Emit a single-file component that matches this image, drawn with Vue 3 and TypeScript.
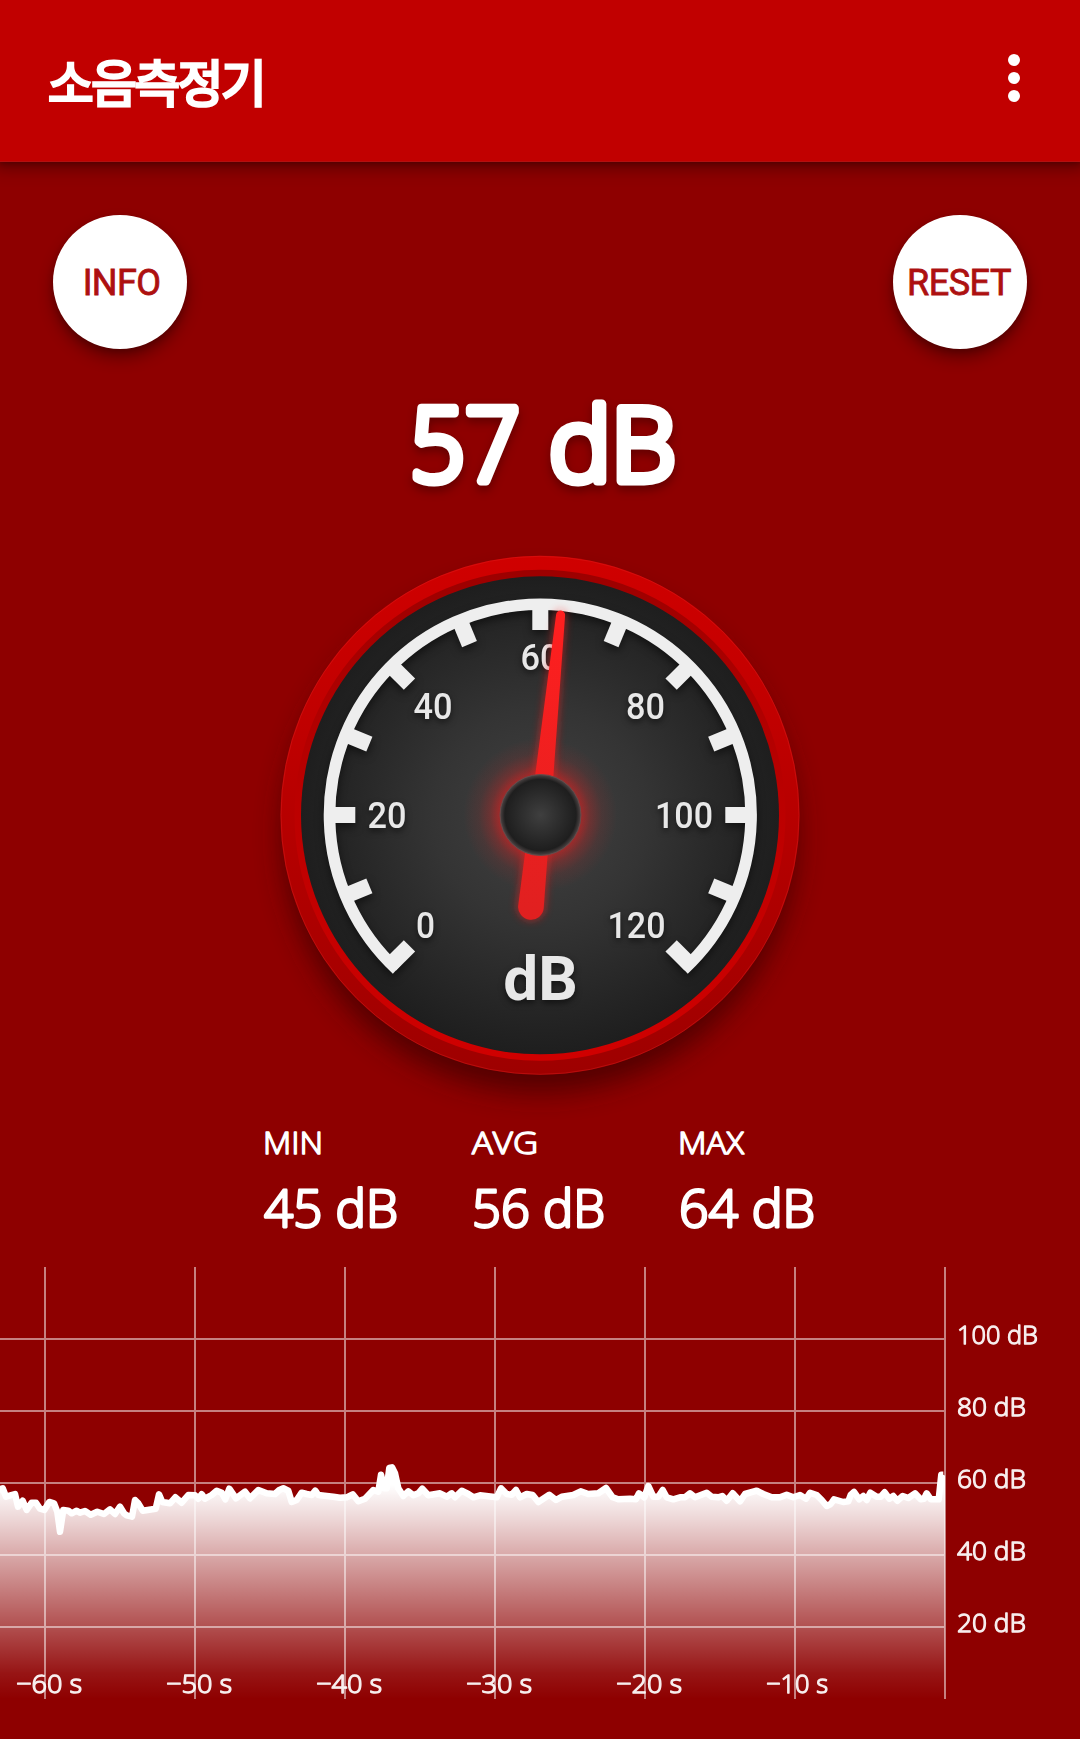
<script setup lang="ts">
interface Stat { label: string; value: string; labelX: number; labelWidth: number; valueX: number; valueWidth: number }
interface DialLabel { text: string; x: number; y: number; width: number }

const stats: Stat[] = [
  { label: 'MIN', value: '45 dB', labelX: 0, labelWidth: 60, valueX: 1, valueWidth: 134 },
  { label: 'AVG', value: '56 dB', labelX: 1, labelWidth: 66, valueX: 1, valueWidth: 133 },
  { label: 'MAX', value: '64 dB', labelX: -1, labelWidth: 66, valueX: 0, valueWidth: 136 },
]

const ticks = Array.from({ length: 13 }, (_, i) => -135 + i * 22.5)

const dialLabels: DialLabel[] = [
  { text: '0', x: 425.5, y: 937.5, width: 19 },
  { text: '20', x: 387, y: 828, width: 39 },
  { text: '40', x: 433, y: 718.5, width: 39 },
  { text: '60', x: 540, y: 669.5, width: 39 },
  { text: '80', x: 645.5, y: 718.5, width: 39 },
  { text: '100', x: 684, y: 828, width: 58 },
  { text: '120', x: 636.5, y: 937.5, width: 58 },
]

const arcPoint = (deg: number, r: number) => {
  const a = (deg * Math.PI) / 180
  return `${(r * Math.sin(a)).toFixed(2)} ${(-r * Math.cos(a)).toFixed(2)}`
}
const scaleArc = `M${arcPoint(-137.1, 210.8)}A210.8 210.8 0 1 1 ${arcPoint(137.1, 210.8)}`

const timeMarks = [60, 50, 40, 30, 20, 10, 0].map((s, i) => ({ s, x: 45 + i * 150 }))
const levelMarks = [100, 80, 60, 40, 20].map((db, i) => ({ db, y: 79 + i * 72 }))

// Level history, three units per pixel, measured from 180px below the plot's top.
const history: number[] = [
  0, 148, 8, 145, 18, 170, 45, 162, 54, 200, 68, 182, 80, 210, 95, 188, 108, 188, 120, 206, 133, 210, 148, 186, 162, 190,
  172, 215, 180, 275, 190, 210, 205, 212, 215, 220, 230, 212, 240, 218, 255, 213, 272, 224, 292, 215, 312, 222, 330, 208,
  345, 222, 360, 200, 372, 220, 380, 226, 396, 230, 405, 180, 415, 190, 428, 212, 467, 206, 477, 163, 487, 186, 510, 190,
  526, 172, 545, 188, 565, 165, 585, 166, 595, 176, 605, 163, 615, 176, 635, 165, 650, 152, 665, 158, 676, 178, 688, 146,
  708, 175, 735, 155, 750, 175, 775, 150, 800, 160, 825, 162, 838, 150, 850, 145, 865, 152, 875, 186, 890, 180, 905, 158,
  920, 162, 935, 165, 946, 152, 955, 165, 980, 168, 1000, 170, 1020, 173, 1040, 172, 1058, 163, 1075, 184, 1095, 176,
  1120, 150, 1135, 155, 1143, 104, 1152, 145, 1160, 145, 1168, 84, 1176, 82, 1185, 100, 1195, 145, 1210, 168, 1225, 154,
  1240, 166, 1255, 160, 1267, 146, 1285, 166, 1320, 160, 1340, 170, 1355, 160, 1365, 172, 1385, 152, 1405, 162, 1420, 172,
  1440, 166, 1490, 172, 1503, 145, 1520, 162, 1535, 164, 1548, 150, 1560, 172, 1580, 162, 1598, 165, 1615, 186, 1648, 164,
  1668, 180, 1685, 170, 1720, 165, 1742, 154, 1765, 162, 1795, 160, 1818, 144, 1838, 172, 1855, 178, 1890, 176, 1908, 178,
  1917, 160, 1933, 172, 1945, 138, 1960, 170, 1975, 170, 1988, 150, 2000, 172, 2020, 178, 2040, 172, 2055, 172, 2070, 160,
  2085, 172, 2120, 158, 2135, 170, 2155, 172, 2167, 168, 2180, 182, 2198, 160, 2220, 184, 2235, 162, 2270, 152, 2290, 162,
  2315, 172, 2340, 172, 2360, 164, 2380, 172, 2400, 165, 2418, 176, 2430, 158, 2450, 165, 2465, 180, 2480, 198, 2492, 192,
  2502, 178, 2530, 186, 2545, 184, 2552, 165, 2562, 156, 2578, 178, 2590, 168, 2600, 180, 2611, 158, 2630, 170, 2642, 170,
  2654, 157, 2668, 176, 2680, 168, 2692, 182, 2708, 168, 2725, 174, 2745, 160, 2762, 178, 2772, 176, 2780, 160, 2792, 178,
  2816, 178, 2824, 104, 2830, 104,
]
const points: string[] = []
for (let i = 0; i < history.length; i += 2) {
  points.push(`${(history[i] / 3).toFixed(1)} ${(history[i + 1] / 3 + 180).toFixed(1)}`)
}
const tracePath = `M-6 231L${points.join('L')}`
const areaPath = `M-6 231L${points.join('L')}L945 216V439H-6Z`
</script>

<template>
  <main class="app">
    <header class="bar">
      <h1 class="title">소음측정기</h1>
      <button class="menu" aria-label="메뉴"><i></i><i></i><i></i></button>
    </header>

    <section class="actions">
      <button class="round info">INFO</button>
      <button class="round reset">RESET</button>
    </section>

    <svg class="readout" width="340" height="180" viewBox="370 350 340 180">
      <text x="410" y="481" textLength="110" lengthAdjust="spacingAndGlyphs">57</text>
      <text x="549" y="481" textLength="127" lengthAdjust="spacingAndGlyphs">dB</text>
    </svg>

    <svg class="gauge" width="620" height="590" viewBox="230 530 620 590">
      <defs>
        <linearGradient id="rim" x1="0" y1="0" x2="0" y2="1">
          <stop offset="0" stop-color="#d00000" /><stop offset="1" stop-color="#9e0000" />
        </linearGradient>
        <linearGradient id="bevel" x1="0" y1="0" x2="0" y2="1">
          <stop offset="0" stop-color="#9c0000" /><stop offset=".45" stop-color="#ba0000" /><stop offset="1" stop-color="#d00000" />
        </linearGradient>
        <radialGradient id="face">
          <stop offset="0" stop-color="#414141" /><stop offset=".45" stop-color="#343434" /><stop offset="1" stop-color="#1e1e1e" />
        </radialGradient>
        <radialGradient id="hub">
          <stop offset="0" stop-color="#3f3f3f" /><stop offset=".88" stop-color="#1e1e1e" /><stop offset="1" stop-color="#4e4646" />
        </radialGradient>
        <radialGradient id="glow">
          <stop offset="0" stop-color="#f01c1c" stop-opacity=".6" /><stop offset=".52" stop-color="#f01c1c" stop-opacity=".56" />
          <stop offset=".65" stop-color="#f01c1c" stop-opacity=".27" /><stop offset=".8" stop-color="#f01c1c" stop-opacity=".09" />
          <stop offset="1" stop-color="#f01c1c" stop-opacity="0" />
        </radialGradient>
        <linearGradient id="needle" gradientUnits="userSpaceOnUse" x1="0" y1="-205" x2="0" y2="105">
          <stop offset="0" stop-color="#ff1f1f" /><stop offset="1" stop-color="#e02020" />
        </linearGradient>
        <filter id="soft" x="-30%" y="-30%" width="160%" height="160%"><feGaussianBlur stdDeviation="14" /></filter>
        <filter id="halo" filterUnits="userSpaceOnUse" x="-50" y="-230" width="100" height="360"><feGaussianBlur stdDeviation="5" /></filter>
      </defs>
      <circle class="shade" cx="540" cy="835" r="257" filter="url(#soft)" />
      <circle cx="540" cy="815.3" r="259.5" fill="url(#rim)" />
      <circle class="edge" cx="540" cy="815.3" r="259" />
      <circle cx="540" cy="815.3" r="245.5" fill="url(#bevel)" />
      <circle cx="540" cy="815.3" r="239" fill="url(#face)" />
      <g class="scale" transform="translate(540.3 815)">
        <path :d="scaleArc" />
        <rect v-for="t in ticks" :key="t" x="-8" y="-212" width="16" height="27" :transform="`rotate(${t})`" />
      </g>
      <g class="numbers">
        <text v-for="l in dialLabels" :key="l.text" :x="l.x" :y="l.y" :textLength="l.width" lengthAdjust="spacingAndGlyphs">{{ l.text }}</text>
        <text class="unit" x="540.5" y="999.5">dB</text>
      </g>
      <g transform="translate(540.3 815) rotate(5.8)">
        <path class="haze" filter="url(#halo)" d="M-4-201A4 4 0 0 1 4-201L12.8 92A12.8 12.8 0 0 1-12.8 92Z" />
        <circle r="77" fill="url(#glow)" />
        <path fill="url(#needle)" d="M-4.5-201A4.5 4.5 0 0 1 4.5-201L12.8 92.5A12.8 12.8 0 0 1-12.8 92.5Z" />
      </g>
      <circle class="hub" cx="540.5" cy="815" r="40.5" fill="url(#hub)" />
    </svg>

    <section class="stats">
      <svg v-for="s in stats" :key="s.label" width="208" height="136" viewBox="-4 0 208 136">
        <text class="name" :x="s.labelX" y="34" :textLength="s.labelWidth" lengthAdjust="spacingAndGlyphs">{{ s.label }}</text>
        <text class="value" :x="s.valueX" y="107" :textLength="s.valueWidth" lengthAdjust="spacingAndGlyphs">{{ s.value }}</text>
      </svg>
    </section>

    <svg class="chart" width="1080" height="479" viewBox="0 0 1080 479">
      <defs>
        <linearGradient id="area" gradientUnits="userSpaceOnUse" x1="0" y1="225" x2="0" y2="439">
          <stop offset="0" stop-color="#fff" stop-opacity="1" /><stop offset=".18" stop-color="#fff" stop-opacity=".82" />
          <stop offset=".33" stop-color="#fff" stop-opacity=".66" /><stop offset=".665" stop-color="#fff" stop-opacity=".31" />
          <stop offset=".88" stop-color="#fff" stop-opacity=".08" /><stop offset="1" stop-color="#fff" stop-opacity="0" />
        </linearGradient>
      </defs>
      <path :d="areaPath" fill="url(#area)" />
      <path class="trace" :d="tracePath" />
      <g class="grid">
        <rect v-for="m in levelMarks" :key="m.db" x="0" :y="m.y - 1" width="944" height="2" />
        <rect v-for="m in timeMarks" :key="m.s" :x="m.x - 1" y="7" width="2" height="432" />
      </g>
      <g class="labels">
        <text v-for="m in levelMarks" :key="m.db" x="957" :y="m.y + 5" :textLength="m.db === 100 ? 81 : 69" lengthAdjust="spacingAndGlyphs">{{ m.db }} dB</text>
        <template v-for="m in timeMarks" :key="m.s">
          <text v-if="m.s" :x="m.x - 29" y="433" :textLength="m.s === 10 ? 62 : 66" lengthAdjust="spacingAndGlyphs">−{{ m.s }} s</text>
        </template>
      </g>
    </svg>
  </main>
</template>

<style>
body { background: #8e0000; }
</style>

<style scoped>
.app { display: flex; flex-direction: column; align-items: center; width: 1080px; height: 1739px; overflow: hidden; background: #8e0000; color: #fff; font-family: "Noto Sans", "Noto Sans CJK KR", sans-serif; }
.bar { display: flex; flex: none; align-items: center; justify-content: space-between; box-sizing: border-box; width: 1080px; height: 162px; padding: 0 48px; background: #c10000; border-bottom: 1px solid #b41010; box-shadow: 0 0 16px 6px rgba(0, 0, 0, .34), 0 2px 5px rgba(0, 0, 0, .2); }
.title { margin: 0; font: 400 49.5px/74px "Noto Sans CJK KR", sans-serif; letter-spacing: -2.3px; -webkit-text-stroke: 3px #fff; stroke-linejoin: round; }
.menu { display: flex; flex-direction: column; align-items: center; gap: 6px; width: 36px; margin-top: -5px; padding: 0; border: 0; background: none; }
.menu i { width: 12px; height: 12px; border-radius: 50%; background: #fff; }
.actions { display: flex; flex: none; justify-content: space-between; box-sizing: border-box; width: 1080px; height: 188px; padding: 53px 53px 0; }
.round { width: 134px; height: 134px; padding: 0; border: 0; border-radius: 50%; background: #fff; color: #ad1010; font: 400 36px/136px Roboto, sans-serif; text-align: center; -webkit-text-stroke: .8px #ad1010; box-shadow: 0 9px 16px rgba(0, 0, 0, .33), 0 3px 6px rgba(0, 0, 0, .18); }
.info { letter-spacing: -.6px; padding-left: 3px; }
.reset { letter-spacing: -.5px; padding-right: 2px; }
.readout, .gauge, .chart, .stats { flex: none; display: block; }
.readout text { fill: #fff; stroke: #fff; stroke-width: 9px; stroke-linejoin: round; font: 300 102px "Open Sans", sans-serif; }
.readout { filter: drop-shadow(0 5px 5px rgba(0, 0, 0, .3)); }
.shade { fill: #300000; opacity: .65; }
.edge { fill: none; stroke: #e02020; stroke-width: 1; opacity: .4; }
.scale { filter: drop-shadow(0 4px 4px rgba(0, 0, 0, .5)); fill: #eee; }
.scale path { fill: none; stroke: #eee; stroke-width: 11.6; }
.numbers { filter: drop-shadow(0 3px 3px rgba(0, 0, 0, .55)); font: 500 36px Roboto, sans-serif; fill: #e8e8e8; text-anchor: middle; }
.unit { font-size: 62px; font-weight: 700; }
.haze { fill: #ff1f1f; opacity: .7; }
.hub { stroke: #6a4a4a; stroke-width: 1; }
.stats { display: flex; width: 624px; height: 136px; margin-left: 62px; }
.stats text { fill: #fff; stroke: #fff; stroke-linejoin: round; font-family: "Open Sans", sans-serif; font-weight: 300; }
.name { font-size: 31px; stroke-width: 1.5px; }
.value { font-size: 51.5px; stroke-width: 2.8px; }
.chart { margin-top: 4px; }
.trace { fill: none; stroke: #fff; stroke-width: 6.5; stroke-linejoin: round; }
.grid { fill: #fff; opacity: .5; }
.labels text { fill: #fff; stroke: #fff; stroke-width: 1.3px; stroke-linejoin: round; opacity: .93; font: 300 26.5px "Open Sans", sans-serif; }
</style>
